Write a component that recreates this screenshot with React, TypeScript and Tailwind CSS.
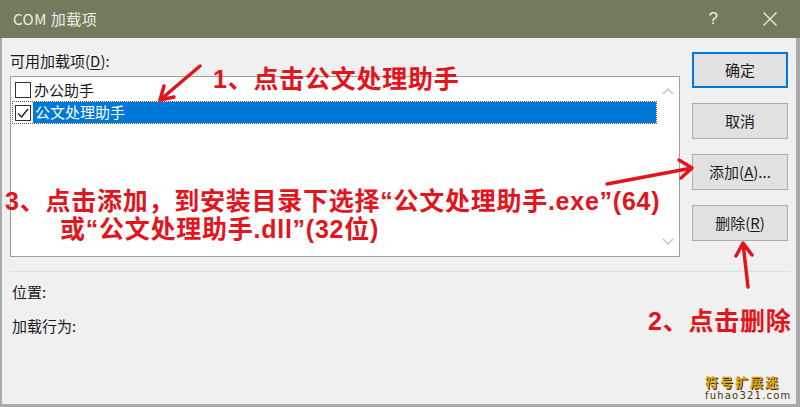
import React from 'react';

const Check = ({ checked }: { checked?: boolean }) => (
  <div className="w-[16px] h-[16px] border border-[#333] bg-white flex items-center justify-center shrink-0">
    {checked && (
      <svg width="14" height="14" viewBox="0 0 14 14">
        <path d="M2 7.5 L5.5 11 L12 3" fill="none" stroke="#222" strokeWidth="1.4" />
      </svg>
    )}
  </div>
);

const Btn = ({ children, primary }: { children: React.ReactNode; primary?: boolean }) => (
  <div
    className={`w-[96px] h-[36px] flex items-center justify-center bg-[#e1e1e1] text-[15px] text-[#1b1b1b] ${
      primary ? 'border-2 border-[#0078d7]' : 'border border-[#adadad]'
    }`}
  >
    {children}
  </div>
);

const Note = ({ className, children }: { className: string; children: React.ReactNode }) => (
  <div
    className={`absolute whitespace-nowrap text-[25px] leading-[25px] font-bold tracking-[0.75px] text-[#e3141c] font-['Liberation_Sans','Noto_Sans_CJK_SC',sans-serif] ${className}`}
  >
    {children}
  </div>
);

export default function App() {
  return (
    <div className="relative w-[800px] h-[407px] overflow-hidden bg-[#f0f0f0] font-['Noto_Sans_CJK_SC',sans-serif] text-[#1b1b1b]">
      {/* title bar */}
      <div className="h-[38px] bg-[#727c5c] flex items-center pl-[13px] pr-[22px] text-[#eceee6]">
        <span className="text-[15px] tracking-[0.5px]">COM 加载项</span>
        <span className="ml-auto mr-[44px] text-[17px] font-['Liberation_Sans',sans-serif]">?</span>
        <svg width="16" height="16" viewBox="0 0 16 16">
          <path d="M1.5 1.5 L14.5 14.5 M14.5 1.5 L1.5 14.5" stroke="#eceee6" strokeWidth="1.3" />
        </svg>
      </div>

      {/* body */}
      <div className="h-[369px] flex flex-col border-l-2 border-r-[4px] border-b-[3px] border-[#a9a9a9]">
        <div className="flex pl-[8px]">
          <div className="w-[670px] pt-[13px]">
            <div className="h-[20px] leading-[20px] text-[15px]">
              可用加载项(<span className="underline underline-offset-2">D</span>):
            </div>
            <div className="mt-[5px] h-[181px] border border-[#a0a0a0] bg-white flex">
              <div className="flex-1 pt-[2px] text-[15px]">
                <div className="h-[22px] flex items-center pl-[4px] gap-[3px]">
                  <Check />
                  <span>办公助手</span>
                </div>
                <div className="h-[23px] ml-[1px] flex items-center border border-dotted border-[#555] pl-[2px]">
                  <Check checked />
                  <div className="flex-1 h-full bg-[#0078d7] text-white flex items-center pl-[2px] ml-[2px]">
                    公文处理助手
                  </div>
                </div>
              </div>
              <div className="w-[22px] flex flex-col items-center justify-between py-[10px]">
                <svg width="12" height="8" viewBox="0 0 12 8">
                  <path d="M1 7 L6 2 L11 7" fill="none" stroke="#c2c2c2" strokeWidth="1.5" />
                </svg>
                <svg width="12" height="8" viewBox="0 0 12 8">
                  <path d="M1 1 L6 6 L11 1" fill="none" stroke="#c2c2c2" strokeWidth="1.5" />
                </svg>
              </div>
            </div>
          </div>
          <div className="ml-[12px] pt-[14px] flex flex-col gap-[15px]">
            <Btn primary>确定</Btn>
            <Btn>取消</Btn>
            <Btn>
              添加(<span className="underline underline-offset-2">A</span>)...
            </Btn>
            <Btn>
              删除(<span className="underline underline-offset-2">R</span>)
            </Btn>
          </div>
        </div>

        <div className="mt-[14px] ml-[8px] mr-[6px] h-px bg-[#dcdcdc]" />
        <div className="ml-[10px] mt-[10px] h-[20px] leading-[20px] text-[15px]">位置:</div>
        <div className="ml-[10px] mt-[14px] h-[20px] leading-[20px] text-[15px]">加载行为:</div>
      </div>

      {/* red annotations */}
      <svg className="absolute inset-0" width="800" height="407" viewBox="0 0 800 407">
        <g fill="none" stroke="#e3141c" strokeWidth="3.5" strokeLinecap="round" strokeLinejoin="round">
          <path d="M200 66 L160 100 M160 100 L164 86 M160 100 L174 97" />
          <path d="M607 184 L692 168 M692 168 L679 160 M692 168 L681 178" />
          <path d="M748 287 L743 243 M743 243 L736 256 M743 243 L752 255" />
        </g>
      </svg>
      <Note className="left-[213px] top-[67px]">1、点击公文处理助手</Note>
      <Note className="left-[5px] top-[189px]">3、点击添加，到安装目录下选择“公文处理助手.exe”(64)</Note>
      <Note className="left-[60px] top-[217px]">或“公文处理助手.dll”(32位)</Note>
      <Note className="left-[648px] top-[309px]">2、点击删除</Note>

      {/* watermark */}
      <div className="absolute left-[705px] top-[374px] flex flex-col items-start">
        <span className="text-[13px] leading-[16px] font-bold tracking-[2px] text-[#d9a514] [text-shadow:1px_1px_0_#3a2a00]">
          符号扩展迷
        </span>
        <span className="text-[10px] leading-[12px] tracking-[1.2px] text-[#4a3605] font-['DejaVu_Sans',sans-serif]">
          fuhao321.com
        </span>
      </div>
    </div>
  );
}
